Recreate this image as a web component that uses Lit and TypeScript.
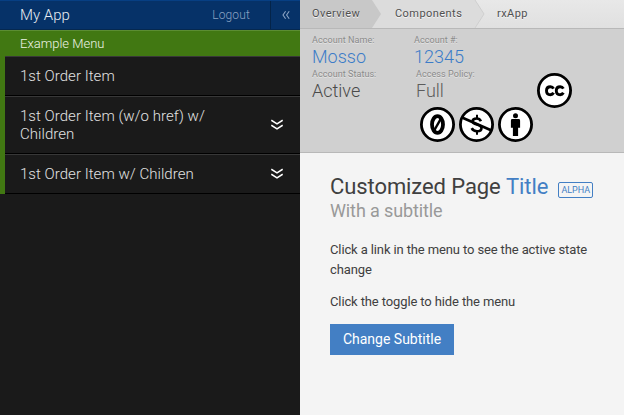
import { LitElement, html, svg, css, nothing } from "lit";
import { customElement, property } from "lit/decorators.js";

const chevrons = html`<svg class="chev" width="12" height="12" viewBox="0 0 12 12" fill="none" stroke="#fff" stroke-width="1.5">
  <path d="M.3 1.2 6 4.9l5.7-3.7M.3 6.2 6 9.9l5.7-3.7" />
</svg>`;

@customElement("nav-item")
class NavItem extends LitElement {
  @property() label = "";
  @property({ type: Boolean }) expandable = false;

  static styles = css`
    :host {
      display: flex;
      align-items: center;
      justify-content: space-between;
      box-sizing: border-box;
      padding: 10px 17px 10px 15px;
      background: #1a1a1a;
      border-top: 1px solid #383838;
      border-bottom: 1px solid #000;
      color: #e2e2e2;
      font-size: 15px;
      font-weight: 300;
      line-height: 18px;
      letter-spacing: .04px;
    }
    .label { width: 215px; }
    .chev { display: block; flex: none; }
  `;

  render() {
    return html`<span class="label">${this.label}</span>${this.expandable ? chevrons : nothing}`;
  }
}

const glyphs: Record<string, unknown> = {
  cc: svg`<g fill="none" stroke="#000" stroke-width="2.9">
    <path d="M16.6 15.6A3.7 3.7 0 0 0 13.4 13.7C11 13.7 9.5 15.3 9.5 17.7S11 21.7 13.4 21.7A3.7 3.7 0 0 0 16.6 19.8" />
    <path d="M26.4 15.6A3.7 3.7 0 0 0 23.2 13.7C20.8 13.7 19.3 15.3 19.3 17.7S20.8 21.7 23.2 21.7A3.7 3.7 0 0 0 26.4 19.8" /></g>`,
  zero: svg`<g fill="none" stroke="#000"><ellipse cx="17.5" cy="17.5" rx="5.5" ry="8.3" stroke-width="3.8" />
    <path d="M20.6 12.2 14.5 23" stroke-width="2.4" /></g>`,
  nc: svg`<g fill="none" stroke="#000"><path d="M21.9 14.2C21 12.2 19.6 11.5 17.8 11.5C15.4 11.5 13.6 12.6 13.6 14.4C13.6 18 22.5 17 22.5 20.9C22.5 23 20.4 24.2 18 24.2C15.4 24.2 13.6 23 12.7 21.2" stroke-width="2.6" />
    <path d="M18 7.8v4M18 23.5v4.2" stroke-width="2" />
    <path d="M3 10.6 32.6 23.6" stroke-width="2.7" /></g>`,
  by: svg`<circle cx="17.5" cy="8.8" r="2.5" /><path d="M14.3 12h6.4a1.4 1.4 0 0 1 1.4 1.4v7.3h-2v8.3h-5.2v-8.3h-2v-7.3a1.4 1.4 0 0 1 1.4-1.4z" />`,
};

const badge = (name: string) => html`<svg class="cc" width="35" height="35" viewBox="0 0 35 35">
  <circle cx="17.5" cy="17.5" r="16.1" fill="#fff" stroke="#000" stroke-width="2.8" />${glyphs[name]}
</svg>`;

@customElement("app-root")
class AppRoot extends LitElement {
  static styles = css`
    :host {
      display: grid;
      grid-template-columns: 300px 324px;
      height: 417px;
      grid-template-rows: 415px;
      background: #fff;
      overflow: hidden;
      font-family: Roboto, sans-serif;
      font-size: 13px;
      color: #404040;
    }
    .side { background: #1a1a1a; }
    .head {
      display: flex;
      box-sizing: border-box;
      height: 30px;
      background: #063268;
      border-top: 1px solid #073f83;
      border-bottom: 1px solid #052850;
      color: #e8edf3;
      line-height: 28px;
      font-weight: 300;
    }
    .app { flex: 1; padding-left: 20px; font-size: 15px; }
    .logout { padding-right: 20px; font-size: 12px; color: #8aa3c4; letter-spacing: .15px; }
    .toggle {
      display: flex;
      align-items: center;
      justify-content: center;
      width: 29px;
      border-left: 1px solid #042449;
    }
    .menu-title {
      box-sizing: border-box;
      height: 26px;
      padding-left: 20px;
      background: #417812;
      border-top: 1px solid #5b8d32;
      color: #eef4e6;
      line-height: 26px;
      font-weight: 300;
    }
    .items { border-left: 5px solid #417812; }
    .items nav-item { display: flex; }
    .main { background: #f4f4f4; }
    .crumbs {
      display: flex;
      position: relative;
      box-sizing: border-box;
      height: 29px;
      border-bottom: 1px solid #b8b8b8;
      background: linear-gradient(#e8e8e8, #e0e0e0);
      font-size: 11px;
      line-height: 28px;
      color: #505050;
      letter-spacing: .45px;
      text-shadow: 0 1px #f4f4f4;
    }
    .shape { position: absolute; left: 0; top: 0; }
    .crumb { position: relative; box-sizing: border-box; padding-left: 12px; }
    .c1 { width: 83px; }
    .c2 { width: 102px; }
    .account {
      display: flex;
      box-sizing: border-box;
      height: 124px;
      padding: 6px 12px 0;
      background: #d0d0d0;
      border-bottom: 1px solid #b8b8b8;
    }
    .col { flex: none; width: 102px; }
    .key { display: block; height: 10px; font-size: 9px; line-height: 10px; letter-spacing: .06px; color: #8a8a8a; text-shadow: 0 1px #e4e4e4; white-space: nowrap; }
    .val { display: block; height: 24px; font-size: 18px; line-height: 24px; font-weight: 300; color: #4a4a4a; }
    .link { color: #3c7cc8; }
    .second { padding-left: 2px; }
    .light { color: #5c5c5c; }
    .badges {
      display: grid;
      grid-template-columns: repeat(4, 35px);
      grid-template-rows: 35px 35px;
      column-gap: 4px;
      row-gap: 0;
      flex: none;
      margin-left: -96px;
      padding-top: 38px;
    }
    .cc { display: block; grid-row: 2; margin-top: -1px; }
    .cc:first-child { grid-area: 1 / 4; margin-top: 0; }
    .page { padding: 19px 30px 0; }
    .title { display: flex; align-items: center; height: 30px; margin: 0; font-size: 22px; font-weight: 400; line-height: 30px; letter-spacing: -.09px; white-space: pre; }
    .blue { color: #437fc4; }
    .tag {
      box-sizing: border-box;
      width: 35px;
      height: 16px;
      margin: 5px 0 0 10px;
      border: 1px solid #437fc4;
      border-radius: 2px;
      color: #437fc4;
      font-size: 9px;
      line-height: 14px;
      letter-spacing: 0;
      text-align: center;
    }
    .sub { height: 20px; margin: -1px 0 0; font-size: 18px; line-height: 20px; color: #999; letter-spacing: -.12px; }
    .para { margin: 0; padding-top: 12px; line-height: 20px; letter-spacing: -.12px; }
    .first { padding-top: 19px; }
    .btn {
      display: block;
      width: 124px;
      height: 31px;
      margin: 12px 0 0;
      padding: 0;
      border: 0;
      background: #437fc4;
      color: #fff;
      font: 400 14px/31px Roboto, sans-serif;
    }
  `;

  render() {
    return html`
      <div class="side">
        <div class="head">
          <span class="app">My App</span><span class="logout">Logout</span>
          <span class="toggle"><svg width="8" height="8" viewBox="0 0 8 8" fill="none" stroke="#8aa3c4" stroke-width="1.1"><path d="M3.6.3 1 4l2.6 3.7M7.2.3 4.6 4l2.6 3.7" /></svg></span>
        </div>
        <div class="menu-title">Example Menu</div>
        <div class="items">
          <nav-item label="1st Order Item"></nav-item>
          <nav-item label="1st Order Item (w/o href) w/ Children" expandable></nav-item>
          <nav-item label="1st Order Item w/ Children" expandable></nav-item>
        </div>
      </div>
      <div class="main">
        <div class="crumbs">
          <svg class="shape" width="190" height="28" viewBox="0 0 190 28">
            <path d="M0 0H175L184 14 175 28H0z" fill="#dcdcdc" />
            <path d="M175 0 184 14 175 28" fill="none" stroke="#cfcfcf" />
            <path d="M0 0H72L81 14 72 28H0z" fill="#c8c8c8" />
          </svg>
          <span class="crumb c1">Overview</span><span class="crumb c2">Components</span><span class="crumb">rxApp</span>
        </div>
        <div class="account">
          <div class="col">
            <span class="key">Account Name:</span><span class="val link">Mosso</span>
            <span class="key">Account Status:</span><span class="val">Active</span>
          </div>
          <div class="col">
            <span class="key">Account #:</span><span class="val link">12345</span>
            <span class="key second">Access Policy:</span><span class="val second light">Full</span>
          </div>
          <div class="badges">${["cc", "zero", "nc", "by"].map(badge)}</div>
        </div>
        <div class="page">
          <h1 class="title">Customized Page <span class="blue">Title</span><span class="tag">ALPHA</span></h1>
          <p class="sub">With a subtitle</p>
          <p class="para first">Click a link in the menu to see the active state change</p>
          <p class="para">Click the toggle to hide the menu</p>
          <button class="btn">Change Subtitle</button>
        </div>
      </div>
    `;
  }
}
